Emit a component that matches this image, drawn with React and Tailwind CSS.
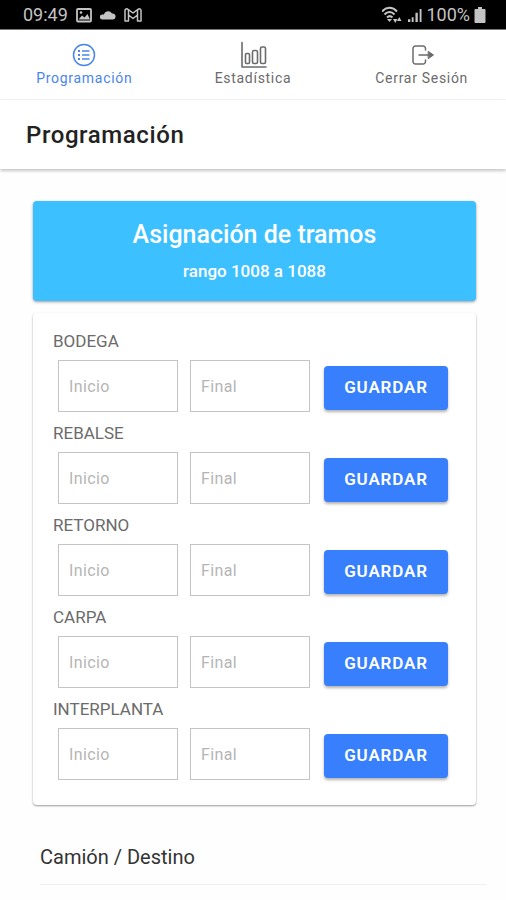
import React from 'react';

const sections = ['BODEGA', 'REBALSE', 'RETORNO', 'CARPA', 'INTERPLANTA'];

function ListIcon() {
  return (
    <svg className="h-6 w-6" viewBox="0 0 24 24" fill="none" stroke="currentColor" strokeWidth="1.5" aria-hidden="true">
      <circle cx="12" cy="12" r="10.5" />
      <path d="M10 8h7.500M10 12h7.500M10 16h7.500" />
      <path d="M6 8h2M6 12h2M6 16h2" strokeWidth="2" />
    </svg>
  );
}

function ChartIcon() {
  return (
    <svg className="h-7 w-7" viewBox="0 0 28 28" fill="none" stroke="currentColor" strokeWidth="1.600" aria-hidden="true">
      <path d="M3 1.500v24.500h24" strokeLinecap="round" strokeLinejoin="round" />
      <rect x="6.500" y="12.500" width="4" height="10" rx="1" />
      <rect x="13.500" y="9.500" width="5" height="13" rx="1.500" />
      <rect x="21.500" y="6" width="5" height="16.500" rx="1.500" />
    </svg>
  );
}

function ExitIcon() {
  return (
    <svg className="h-6 w-6" viewBox="0 0 24 24" fill="none" stroke="currentColor" strokeWidth="1.5" strokeLinecap="round" strokeLinejoin="round" aria-hidden="true">
      <path d="M15.500 7V5.500A2.500 2.500 0 0 0 13 3H5.500A2.500 2.500 0 0 0 3 5.500v13A2.500 2.500 0 0 0 5.500 21H13a2.500 2.500 0 0 0 2.500-2.500V17" />
      <path d="M9 12h13" />
      <path d="M18.500 8.500l5 3.500-5 3.500z" fill="currentColor" strokeWidth="1" />
    </svg>
  );
}

const tabs = [
  { label: 'Programación', Icon: ListIcon, color: 'text-[#4a86ea]' },
  { label: 'Estadística', Icon: ChartIcon, color: 'text-[#6b6b6b]' },
  { label: 'Cerrar Sesión', Icon: ExitIcon, color: 'text-[#6b6b6b]' },
];

function StatusBar() {
  return (
    <div className="flex h-[30px] items-center justify-between border-b border-[#777777] bg-black pr-5 pl-[23px] text-lg text-[#c4c4c4]">
      <div className="flex items-center gap-2">
        <span>09:49</span>
        <svg className="h-4 w-4" viewBox="0 0 16 16" aria-hidden="true">
          <rect x="1" y="2" width="14" height="12.500" rx="1" fill="none" stroke="currentColor" strokeWidth="1.8" />
          <path d="M2.500 12.500l3.500-4 2.500 2 3-3.500 2.500 5.500z" fill="currentColor" />
          <circle cx="5" cy="5.500" r="1.300" fill="currentColor" />
        </svg>
        <svg className="h-3 w-4" viewBox="0 0 16 12" aria-hidden="true">
          <path d="M2.500 10.500a2.500 2.500 0 0 1-.3-5h1.600A4.500 4.500 0 0 1 12 4.500a2.800 2.800 0 0 1 3.500 3.200 2.600 2.600 0 0 1-2.500 2.800z" fill="currentColor" />
        </svg>
        <svg className="h-4 w-[18px]" viewBox="0 0 18 16" fill="none" stroke="currentColor" strokeWidth="1.500" strokeLinejoin="round" aria-hidden="true">
          <path d="M1 3.500v10.500h3.500V8L9 11.500 13.500 8v6H17V3.500c0-1.800-2-2-3-1.200L9 6 4 2.300C3 1.500 1 1.700 1 3.500z" />
          <path d="M4.500 8V3M13.500 8V3" />
        </svg>
      </div>
      <div className="flex items-center gap-1">
        <svg className="h-[18px] w-[22px]" viewBox="0 0 22 18" fill="none" stroke="currentColor" strokeWidth="2" aria-hidden="true">
          <path d="M0 5.500c4.500-5 10.500-5 15 0M2.500 8.500c3-3.500 7-3.500 10 0M5 11.500c2-2 3.500-2 5.500 0" />
          <path d="M5 13h5l-2.500 3z" fill="currentColor" stroke="none" />
          <path d="M11 13h4.500l-2.250 4zM15 15h4.500l-2.250-4z" fill="currentColor" stroke="none" />
        </svg>
        <svg className="h-[14px] w-[14px]" viewBox="0 0 15 15" fill="currentColor" aria-hidden="true">
          <path d="M0 12h2.500v3H0zM4 10h2v5H4zM8 5h2.500v10H8zM12.500 1h2v14h-2z" />
        </svg>
        <span>100%</span>
        <svg className="h-4 w-3" viewBox="0 0 12 16" fill="currentColor" aria-hidden="true">
          <path d="M4 0h4v2h2.500a1 1 0 0 1 1 1v12a1 1 0 0 1-1 1h-9a1 1 0 0 1-1-1V3a1 1 0 0 1 1-1H4z" />
        </svg>
      </div>
    </div>
  );
}

function RangeInput({ id, label, placeholder }) {
  return (
    <input
      id={id}
      aria-label={label}
      placeholder={placeholder}
      className="h-[52px] w-0 max-w-[120px] flex-1 border border-[#c4c4c4] bg-white px-2.5 text-base tracking-wide text-[#333333] placeholder:text-[#b5b5b5]"
    />
  );
}

export default function App() {
  return (
    <div className="min-h-screen bg-[#fefefe] font-[Roboto,sans-serif]">
      <StatusBar />
      <nav className="grid h-[70px] grid-cols-3 border-b border-[#f3f3f3] bg-white">
        {tabs.map(({ label, Icon, color }) => (
          <button key={label} type="button" className={`flex flex-col items-center pt-3 ${color}`}>
            <span className="flex h-[26px] items-center"><Icon /></span>
            <span className="text-sm leading-5 tracking-wider">{label}</span>
          </button>
        ))}
      </nav>
      <header className="flex h-[69px] items-center bg-white px-[26px] shadow-[0_2px_3px_rgba(0,0,0,0.22)]">
        <h1 className="text-2xl font-medium tracking-wide text-[#222222]">Programación</h1>
      </header>
      <main className="pt-8 pr-[30px] pl-[33px]">
        <section className="rounded bg-[#3dc0ff] pt-[18px] pb-[18px] text-center text-white shadow-[0_1px_3px_rgba(0,0,0,0.4)]">
          <h2 className="text-[25px] leading-8 font-medium">Asignación de tramos</h2>
          <p className="mt-2 text-[17px] leading-6 font-medium">rango 1008 a 1088</p>
        </section>
        <section className="mt-3 rounded bg-white px-5 pt-[7px] pb-[25px] shadow-[0_1px_2px_rgba(0,0,0,0.4)]">
          {sections.map((name) => (
            <form key={name} onSubmit={(e) => e.preventDefault()}>
              <fieldset>
                <legend className="flex h-10 items-center pt-[3px] text-[17px] text-[#6b6b6b]">
                  {name}
                </legend>
                <div className="flex items-end pr-2 pl-[5px]">
                  <div className="flex flex-1 gap-3">
                    <RangeInput id={`${name}-inicio`} label={`${name} inicio`} placeholder="Inicio" />
                    <RangeInput id={`${name}-final`} label={`${name} final`} placeholder="Final" />
                  </div>
                  <button type="submit" className="mb-0.5 ml-3.5 h-11 w-[124px] rounded bg-[#387ffd] text-[17px] font-semibold tracking-wider text-white shadow-[0_2px_3px_rgba(0,0,0,0.3)]">
                    GUARDAR
                  </button>
                </div>
              </fieldset>
            </form>
          ))}
        </section>
      </main>
      <section className="mt-6 mr-5 ml-10 flex h-14 items-center border-b border-[#eeeeee]">
        <h2 className="text-xl text-[#333333]">Camión / Destino</h2>
      </section>
    </div>
  );
}
